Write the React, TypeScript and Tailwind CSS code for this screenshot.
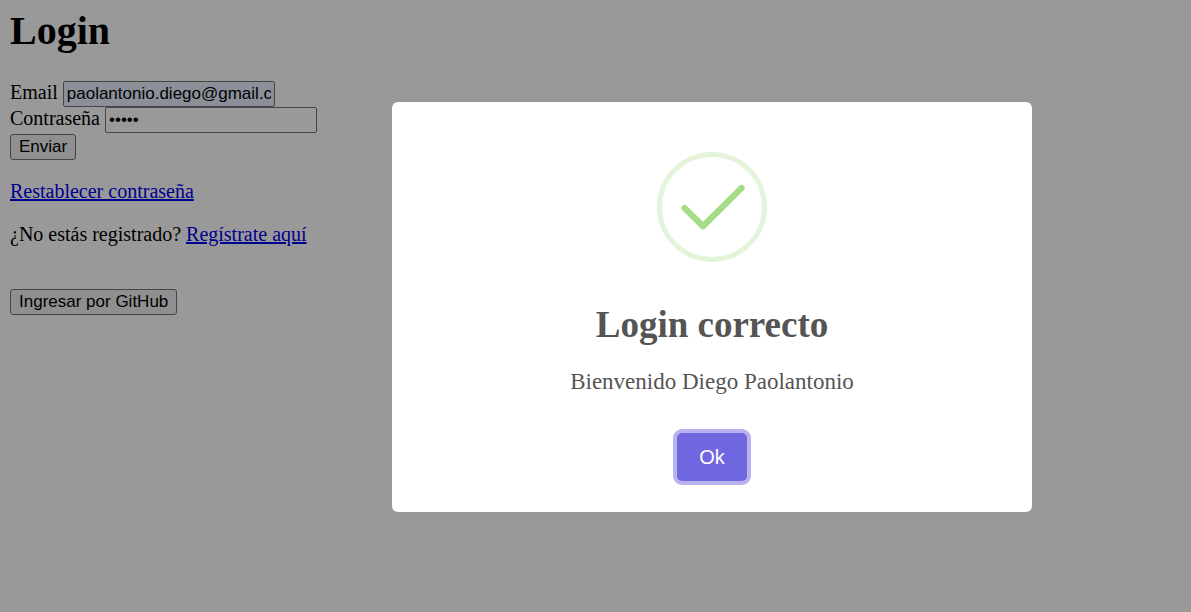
import { useState } from "react";

const field =
  "h-[26px] w-[212px] rounded-[2px] border border-[#767676] px-[3px] font-['Liberation_Sans',Arial,sans-serif] text-[17px] leading-[20px] text-black outline-none";
const button =
  "h-[26px] cursor-pointer rounded-[3px] border border-[#767676] bg-[#efefef] px-[8px] font-['Liberation_Sans',Arial,sans-serif] text-[17px] leading-[20px] text-black";
const link = "text-[#0000ee] underline";

function LoginPage() {
  return (
    <main className="px-[10px] pt-[8px] text-[20px] leading-[23px]">
      <h1 className="mb-[27px] text-[40px] leading-[46px] font-bold">Login</h1>
      <form onSubmit={(e) => e.preventDefault()}>
        <div className="flex h-[26px] items-baseline gap-[5px]">
          <label htmlFor="email">Email</label>
          <input id="email" type="email" defaultValue="paolantonio.diego@gmail.com" className={`${field} bg-[#e8f0fe]`} />
        </div>
        <div className="flex h-[26px] items-baseline gap-[5px]">
          <label htmlFor="password">Contraseña</label>
          <input id="password" type="password" defaultValue="12345" className={`${field} bg-white`} />
        </div>
        <button type="submit" className={`${button} mt-px block`}>Enviar</button>
      </form>
      <p className="mt-[20px]">
        <a href="#restablecer" className={link}>Restablecer contraseña</a>
      </p>
      <p className="mt-[20px]">
        ¿No estás registrado? <a href="#registro" className={link}>Regístrate aquí</a>
      </p>
      <button type="button" className={`${button} mt-[43px]`}>Ingresar por GitHub</button>
    </main>
  );
}

function SuccessDialog({ onClose }: { onClose: () => void }) {
  return (
    <div className="fixed inset-0 flex items-center justify-center bg-black/40 pt-[14px] pr-[12px] pb-[12px] pl-[12px] lg:pl-[245px]">
      <div
        role="dialog"
        aria-modal="true"
        aria-labelledby="dialog-title"
        className="flex w-full max-w-[640px] flex-col items-center rounded-[6px] bg-white pt-[50px] pb-[31px] text-[#545454]"
      >
        <svg viewBox="0 0 110 110" className="size-[110px]" fill="none" aria-hidden="true">
          <circle cx="55" cy="55" r="52.5" stroke="#a5dc86" strokeOpacity="0.3" strokeWidth="5" />
          <path
            d="M27.500 56 46 74.200 84.500 36"
            stroke="#a5dc86"
            strokeWidth="6.200"
            strokeLinecap="round"
            strokeLinejoin="round"
          />
        </svg>
        <h2 id="dialog-title" className="mt-[41px] text-[37px] leading-[44px] font-bold">Login correcto</h2>
        <p className="mt-[22px] text-[23px] leading-[26px]">Bienvenido Diego Paolantonio</p>
        <button
          type="button"
          onClick={onClose}
          className="mt-[38px] h-[48px] w-[70px] cursor-pointer rounded-[5px] bg-[#7066e0] font-['Liberation_Sans',Arial,sans-serif] text-[20px] text-white ring-[4px] ring-[#b8b3f0]"
        >
          Ok
        </button>
      </div>
    </div>
  );
}

export default function App() {
  const [open, setOpen] = useState(true);
  return (
    <div className="min-h-screen bg-white font-['Liberation_Serif','Times_New_Roman',serif] text-black">
      <LoginPage />
      {open && <SuccessDialog onClose={() => setOpen(false)} />}
    </div>
  );
}
